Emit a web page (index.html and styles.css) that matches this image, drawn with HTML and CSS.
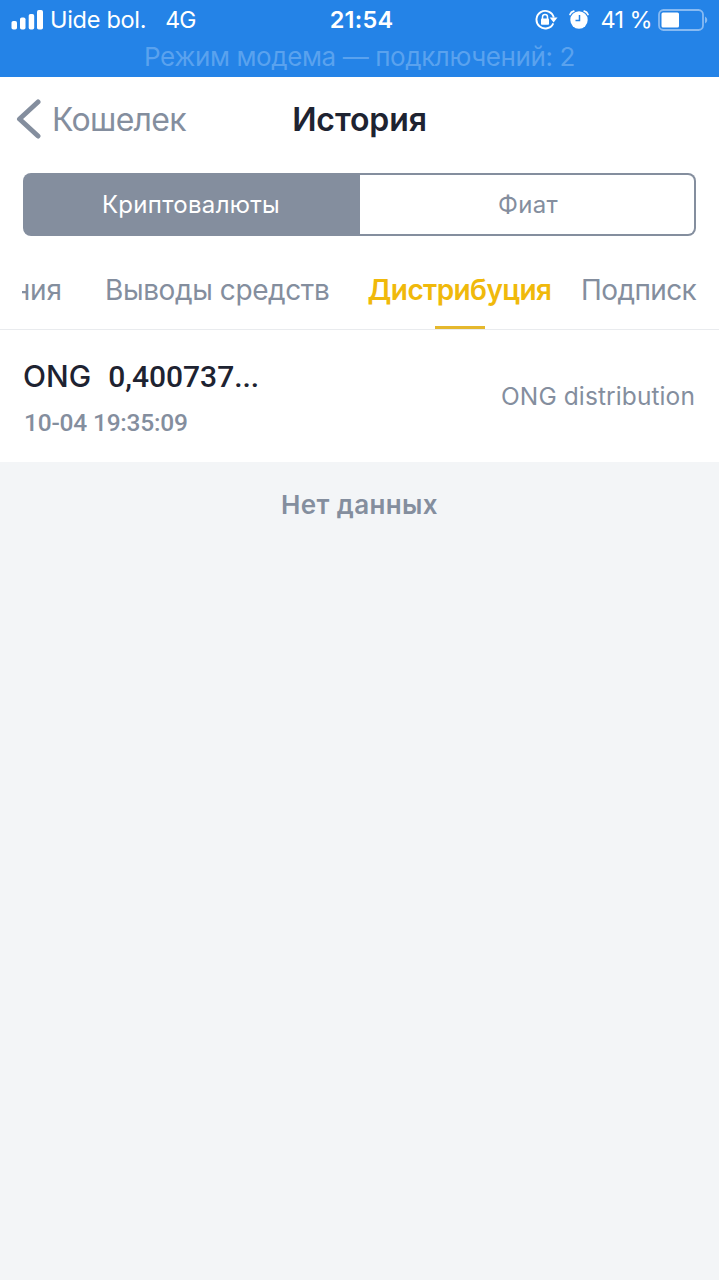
FILE: index.html
```html
<!DOCTYPE html>
<html lang="ru">
<head>
<meta charset="utf-8">
<title>История</title>
<link rel="stylesheet" href="styles.css">
</head>
<body>
<header class="status">
  <div class="status-row">
    <div class="status-left">
      <svg class="signal" width="32" height="20" viewBox="0 0 32 20" fill="#fff"><rect x="0.500" y="11" width="5.500" height="8.500" rx="1.800"/><rect x="9" y="7.500" width="5.500" height="12" rx="1.800"/><rect x="17.700" y="4" width="5.500" height="15.500" rx="1.800"/><rect x="26" y="0" width="6" height="19.500" rx="1.800"/></svg>
      <span class="carrier">Uide bol.</span><span class="network">4G</span>
    </div>
    <span class="clock">21:54</span>
    <div class="status-right">
      <svg class="lock" width="24" height="22" viewBox="0 0 24 22"><path d="M18.300 14.300A8.800 8.800 0 1 1 18.800 8.500" fill="none" stroke="#fff" stroke-width="1.900"/><path d="M14.700 8.500h7.800L18.600 13.500z" fill="#fff"/><rect x="6" y="9.500" width="8" height="6.200" rx=".8" fill="#fff"/><path d="M7.500 10V8a2.500 2.500 0 0 1 5 0v2" fill="none" stroke="#fff" stroke-width="1.500"/></svg>
      <svg class="alarm" width="20" height="20" viewBox="0 0 20 20"><circle cx="10" cy="10" r="8.700" fill="#fff"/><path d="M1 4.500Q2 1.800 4.800 1.200M15.200 1.200Q18 1.800 19 4.500" fill="none" stroke="#fff" stroke-width="1.700" stroke-linecap="round"/><path d="M10.500 5v5.500H6.500" fill="none" stroke="#2483e7" stroke-width="1.500"/></svg>
      <span class="percent">41 %</span>
      <svg class="battery" width="50" height="22" viewBox="0 0 50 22"><rect x="1" y="1" width="44" height="20" rx="4.500" fill="none" stroke="#87baf2" stroke-width="1.800"/><rect x="3.500" y="3.500" width="17.500" height="15" rx="1.500" fill="#fff"/><path d="M47 7.500q2.300 1 2.300 3.500T47 14.500z" fill="#87baf2"/></svg>
    </div>
  </div>
  <div class="modem">Режим модема — подключений: 2</div>
</header>
<main>
  <nav class="navbar">
    <a class="back"><svg width="26" height="42" viewBox="0 0 26 42"><path d="M22 3L3.500 20 22 37" fill="none" stroke="#848e9e" stroke-width="5" stroke-linecap="round" stroke-linejoin="round"/></svg><span class="back-label">Кошелек</span></a>
    <h1 class="title">История</h1>
  </nav>
  <div class="segments">
    <div class="segment segment-active"><span class="crypto">Криптовалюты</span></div>
    <div class="segment segment-plain"><span class="fiat">Фиат</span></div>
  </div>
  <div class="tabs">
    <div class="tab tab-first"><span>ния</span></div>
    <div class="tab tab-withdraw"><span>Выводы средств</span></div>
    <div class="tab tab-active"><span>Дистрибуция</span><i class="underline"></i></div>
    <div class="tab tab-last"><span>Подписк</span></div>
  </div>
  <article class="record">
    <div class="record-main">
      <div class="amount"><span class="coin">ONG</span><span class="value">0,400737...</span></div>
      <time class="date">10-04 19:35:09</time>
    </div>
    <span class="kind">ONG distribution</span>
  </article>
</main>
<p class="empty">Нет данных</p>
</body>
</html>
```
FILE: styles.css
```css
* { box-sizing: border-box; }
body { margin: 0; min-height: 1280px; background: #f3f5f7; font-family: Inter, "Noto Sans", sans-serif; color: #848e9e; white-space: nowrap; overflow: hidden; }
svg { display: block; flex: none; }
.status { height: 77px; background: #2483e7; color: #fff; }
.status-row { display: grid; grid-template-columns: 1fr 63px 1fr; height: 40px; padding: 0 11px; align-items: center; font-size: 24px; line-height: 40px; }
.status-left, .status-right { display: flex; align-items: center; }
.carrier { margin-left: 7px; font-size: 23.5px; letter-spacing: -0.3px; }
.network { margin-left: 19px; font-size: 23px; letter-spacing: -0.8px; }
.clock { font-size: 23.5px; font-weight: 600; letter-spacing: 0.2px; text-align: center; margin: 0 -12px 0 -8px; }
.status-right { justify-content: flex-end; }
.lock { margin-right: 10px; }
.percent { margin: 0 6px 0 11px; font-size: 23.5px; letter-spacing: -0.6px; }
.modem { height: 34px; line-height: 34px; font-size: 26px; letter-spacing: -0.4px; color: #5aa2ee; text-align: center; }
main { background: #fff; }
.navbar { display: grid; grid-template-columns: 1fr auto 1fr; align-items: center; height: 96px; padding: 0 16px 11px; }
.back { display: flex; align-items: center; font-size: 32px; letter-spacing: -0.7px; }
.back-label { margin-left: 10px; }
.title { margin: 0; font-size: 32px; font-weight: 600; letter-spacing: -0.1px; color: #1e2331; }
.segments { display: grid; grid-template-columns: 335px 1fr; height: 63px; margin: 0 23px; padding: 2px; background: #848e9e; border-radius: 8px; font-size: 24px; }
.segment { display: flex; align-items: center; justify-content: center; letter-spacing: 0.3px; }
.segment-active { color: #fff; padding-right: 3px; }
.segment-plain { background: #fff; border-radius: 0 6px 6px 0; padding-left: 2px; }
.tabs { display: flex; height: 94px; padding: 0 22px; border-bottom: 1px solid #e9ebee; font-size: 28px; line-height: 109px; }
.tab { flex: none; }
.tab-first { width: 40px; display: flex; justify-content: flex-end; overflow: hidden; letter-spacing: -0.1px; }
.tab-withdraw { margin-left: 43px; width: 225px; letter-spacing: -0.4px; }
.tab-active { margin-left: 37px; width: 185px; color: #f0b90b; font-weight: 600; letter-spacing: -0.6px; display: flex; flex-direction: column; align-items: center; }
.tab-active span { height: 90px; }
.underline { width: 50px; height: 3px; background: #e5b82d; }
.tab-last { margin-left: 29px; width: 116px; letter-spacing: -0.6px; }
.record { display: flex; justify-content: space-between; align-items: center; height: 132px; padding: 0 24px; }
.record-main { display: flex; flex-direction: column; padding-top: 5px; }
.amount { display: flex; align-items: baseline; height: 49px; line-height: 42px; color: #1e2331; font-size: 30px; font-weight: 500; }
.coin { margin-left: -1px; }
.value { margin-left: 17px; font-family: Roboto, sans-serif; font-weight: 500; font-size: 30px; }
.date { font: 500 24.5px/38px Roboto, sans-serif; letter-spacing: -0.2px; }
.kind { font-size: 24.5px; letter-spacing: 0.1px; }
.empty { margin: 0; padding-top: 24px; line-height: 38px; text-align: center; font-size: 26px; font-weight: 600; letter-spacing: 0.4px; }
```
